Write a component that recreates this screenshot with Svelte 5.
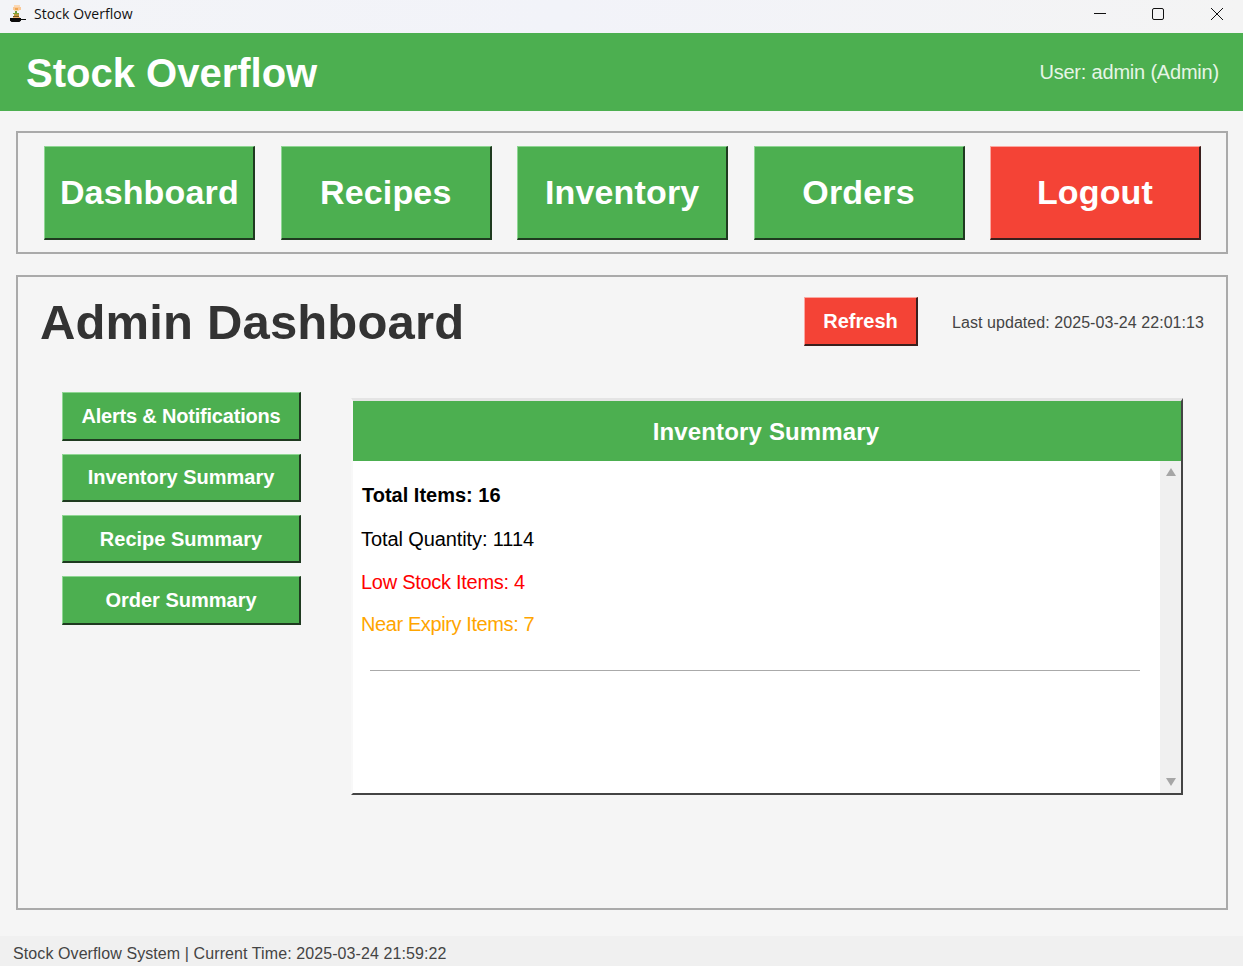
<script>
    const navItems = [
        { label: 'Dashboard' },
        { label: 'Recipes' },
        { label: 'Inventory' },
        { label: 'Orders' },
        { label: 'Logout', danger: true }
    ];
    const sideItems = ['Alerts & Notifications', 'Inventory Summary', 'Recipe Summary', 'Order Summary'];
</script>

<div class="window">
    <div class="titlebar">
        <svg class="app-icon" viewBox="0 0 16 18" width="16" height="18">
            <rect x="4" y="0" width="6" height="2" fill="#fbd9b5" />
            <rect x="3" y="2" width="8" height="3" fill="#f9c998" />
            <rect x="5" y="3" width="3" height="2" fill="#f2a64f" />
            <rect x="4" y="5" width="5" height="1" fill="#fbd9b5" />
            <rect x="5" y="6" width="2" height="2" fill="#6e9b3b" />
            <rect x="3" y="8" width="6" height="1" fill="#7fa23a" />
            <rect x="4" y="9" width="5" height="2" fill="#c09a3c" />
            <rect x="3" y="11" width="6" height="1" fill="#7a5b22" />
            <rect x="3" y="12" width="7" height="1" fill="#f1b374" />
            <path d="M0 13h11v2.5l-1.5 1.5h-8L0 15.5z" fill="#0c0c0c" />
            <rect x="11" y="14" width="5" height="1" fill="#0c0c0c" />
        </svg>
        <span class="app-name">Stock Overflow</span>
        <div class="win-controls">
            <svg class="min" viewBox="0 0 12 12" width="12" height="12"><path d="M0 5.5h12" stroke="#111" fill="none" /></svg>
            <svg viewBox="0 0 12 12" width="12" height="12"><rect x="0.5" y="0.5" width="11" height="11" rx="1.5" stroke="#111" fill="none" /></svg>
            <svg viewBox="0 0 12 12" width="12" height="12"><path d="M0 0l12 12M12 0L0 12" stroke="#111" fill="none" /></svg>
        </div>
    </div>

    <header class="app-header">
        <h1>Stock Overflow</h1>
        <span class="user">User: admin (Admin)</span>
    </header>

    <main>
        <nav class="panel nav">
            {#each navItems as item}
                <button class="btn nav-btn" class:danger={item.danger}>{item.label}</button>
            {/each}
        </nav>

        <section class="panel content">
            <div class="content-head">
                <h2>Admin Dashboard</h2>
                <button class="btn danger refresh">Refresh</button>
                <span class="updated">Last updated: 2025-03-24 22:01:13</span>
            </div>

            <div class="content-body">
                <div class="side">
                    {#each sideItems as item}
                        <button class="btn side-btn">{item}</button>
                    {/each}
                </div>

                <div class="card">
                    <div class="card-title">Inventory Summary</div>
                    <div class="card-scroll">
                        <div class="card-text">
                            <p class="total">Total Items: 16</p>
                            <p class="quantity">Total Quantity: 1114</p>
                            <p class="low">Low Stock Items: 4</p>
                            <p class="expiry">Near Expiry Items: 7</p>
                            <hr />
                        </div>
                        <div class="scrollbar">
                            <span class="arrow up"></span>
                            <span class="arrow down"></span>
                        </div>
                    </div>
                </div>
            </div>
        </section>
    </main>

    <footer>Stock Overflow System | Current Time: 2025-03-24 21:59:22</footer>
</div>

<style>
    :global(body) {
        margin: 0;
        background-color: #f5f5f5;
    }

    .window {
        display: flex;
        flex-direction: column;
        height: 966px;
        overflow: hidden;
        font-family: "Liberation Sans", Arial, sans-serif;
        background-color: #f5f5f5;
    }

    .titlebar {
        display: flex;
        align-items: center;
        height: 33px;
        flex-shrink: 0;
        padding: 0 0 5px 10px;
        box-sizing: border-box;
        background: linear-gradient(90deg, #f3f4f7, #f2f3f9 45%, #f4f4f4);
        font-family: "Open Sans", sans-serif;
        font-size: 14px;
        letter-spacing: 0.07px;
        color: #111;
    }

    .app-icon {
        margin: -1px 8px 0 0;
    }

    .app-name {
        margin-bottom: 2px;
    }

    .win-controls {
        display: flex;
        align-items: center;
        gap: 47px;
        margin-left: auto;
        margin-right: 20px;
    }

    .min {
        margin-right: -1px;
    }

    .app-header {
        display: flex;
        align-items: center;
        justify-content: space-between;
        height: 78px;
        flex-shrink: 0;
        box-sizing: border-box;
        padding: 0 24px 0 26px;
        background-color: #4caf50;
        color: white;
    }

    h1 {
        margin: 2px 0 0;
        font-size: 40px;
        font-weight: bold;
    }

    .user {
        font-size: 20px;
        letter-spacing: -0.2px;
        color: #e6f5e6;
    }

    main {
        display: flex;
        flex-direction: column;
        flex: 1;
        gap: 21px;
        padding: 20px 15px 26px 16px;
    }

    .panel {
        box-sizing: border-box;
        border: 2px solid #aaa;
    }

    .nav {
        display: flex;
        gap: 25.3px;
        height: 123px;
        padding: 13px 25px 12px 26.3px;
    }

    .btn {
        box-sizing: border-box;
        padding: 0;
        font-family: inherit;
        font-weight: bold;
        color: white;
        background-color: #4caf50;
        border: 2px solid;
        border-color: #8fd693 #1f3a20 #1f3a20 #8fd693;
        border-width: 1px 2px 2px 1px;
    }

    .danger {
        background-color: #f44336;
        border-color: #fba8a1 #3a1f1d #3a1f1d #fba8a1;
    }

    .nav-btn {
        width: 211.2px;
        height: 94px;
        font-size: 34px;
        letter-spacing: 0.15px;
    }

    .content {
        flex: 1;
        padding: 20px 22px 0 22px;
    }

    .content-head {
        display: flex;
        align-items: center;
        height: 49px;
    }

    h2 {
        margin: 0;
        font-size: 49px;
        font-weight: bold;
        letter-spacing: 0.15px;
        color: #333;
    }

    .refresh {
        width: 114px;
        height: 49px;
        margin-left: auto;
        font-size: 20px;
    }

    .updated {
        margin: 2px 0 0 34px;
        font-size: 16px;
        letter-spacing: 0.06px;
        color: #444;
    }

    .content-body {
        display: flex;
        align-items: flex-start;
        margin-top: 46px;
    }

    .side {
        display: flex;
        flex-direction: column;
        gap: 12.8px;
        margin: 0.4px 0 0 22px;
        width: 239px;
    }

    .side-btn {
        height: 48.5px;
        padding-top: 1px;
        font-size: 20px;
    }

    .side-btn:first-child {
        letter-spacing: -0.2px;
    }

    .card {
        display: flex;
        flex-direction: column;
        box-sizing: border-box;
        width: 832px;
        height: 397px;
        margin: 6px 0 0 50px;
        border: solid;
        border-width: 3px 2px 2px 2px;
        border-color: #e4e4e4 #444 #444 #f8f8f8;
        background-color: white;
    }

    .card-title {
        height: 60px;
        flex-shrink: 0;
        box-sizing: border-box;
        padding: 1px 2px 0 0;
        background-color: #4caf50;
        color: white;
        font-size: 24px;
        font-weight: bold;
        letter-spacing: 0.15px;
        line-height: 59px;
        text-align: center;
    }

    .card-scroll {
        display: flex;
        flex: 1;
        min-height: 0;
    }

    .card-text {
        flex: 1;
        padding: 23px 20px 0 8px;
        font-size: 20px;
        color: #000;
    }

    p {
        margin: 0 0 20px;
        line-height: 23px;
    }

    .total {
        margin-left: 1px;
        font-weight: bold;
    }

    .quantity {
        margin-top: 21px;
        letter-spacing: -0.1px;
    }

    .low {
        color: #f00;
        letter-spacing: -0.28px;
    }

    .expiry {
        margin-top: -1px;
        color: #ffa500;
        letter-spacing: -0.4px;
    }

    hr {
        margin: 34px 0 0 9px;
        border: none;
        height: 1px;
        background-color: #aaa;
    }

    .scrollbar {
        display: flex;
        flex-direction: column;
        justify-content: space-between;
        align-items: center;
        width: 21px;
        box-sizing: border-box;
        padding: 7px 0;
        background-color: #f0f0f0;
    }

    .arrow {
        width: 0;
        height: 0;
        border-left: 5.5px solid transparent;
        border-right: 5.5px solid transparent;
    }

    .up {
        border-bottom: 8px solid #a6a6a6;
    }

    .down {
        border-top: 8px solid #a6a6a6;
    }

    footer {
        height: 30px;
        flex-shrink: 0;
        box-sizing: border-box;
        padding: 8px 0 0 13px;
        background-color: #f0f0f0;
        font-size: 16px;
        letter-spacing: 0.09px;
        line-height: 20px;
        color: #444;
    }
</style>
